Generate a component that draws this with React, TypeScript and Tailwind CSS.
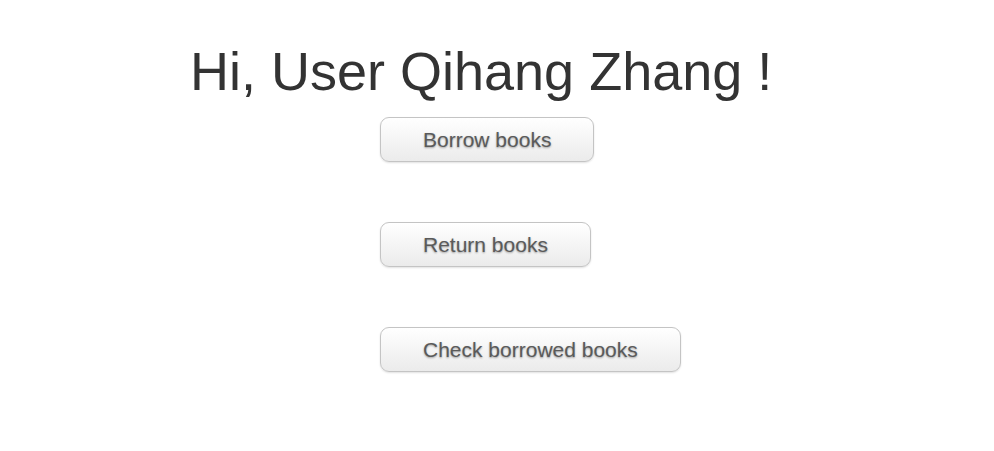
const actions = ['Borrow books', 'Return books', 'Check borrowed books'];

export default function App() {
  return (
    <div className="min-h-[451px] w-full bg-white font-['Liberation_Sans',Arial,sans-serif]">
      <div className="pt-[41px]">
        {/* greeting */}
        <h1 className="ml-[190px] text-[54px] leading-[60px] text-[#333333]">Hi, User Qihang Zhang !</h1>

        <div className="mt-[16px] ml-[380px] flex flex-col items-start gap-[60px]">
          {actions.map((label) => (
            <button
              key={label}
              className="h-[45px] px-[42px] rounded-[9px] border border-[#c4c4c4] bg-gradient-to-b from-white to-[#ebebeb] text-[21px] leading-none text-[#5a5a5a] shadow-[0_1px_2px_rgba(0,0,0,0.12)] [text-shadow:0_1px_2px_rgba(0,0,0,0.35)]"
            >
              {label}
            </button>
          ))}
        </div>
      </div>
    </div>
  );
}
